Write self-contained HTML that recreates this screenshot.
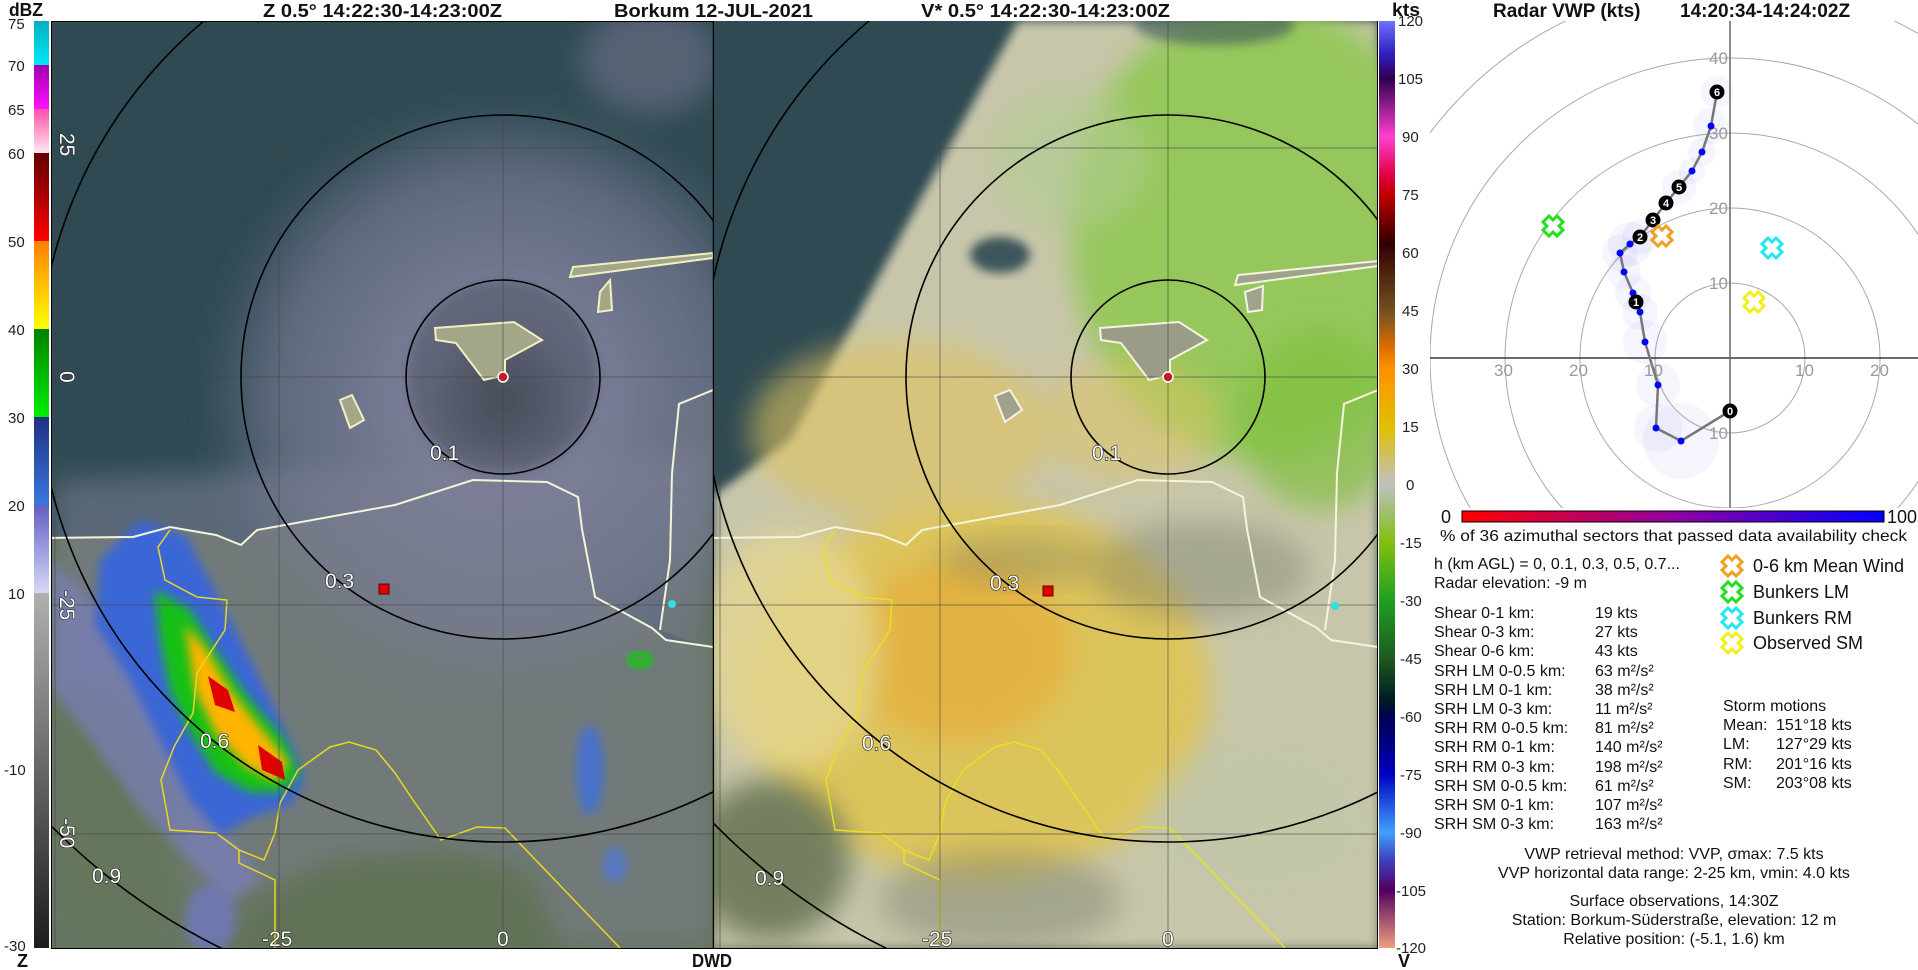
<!DOCTYPE html>
<html><head><meta charset="utf-8"><style>
html,body{margin:0;padding:0;background:#fff;width:1918px;height:970px;overflow:hidden}
svg{display:block}
.t{font-family:"Liberation Sans Narrow","Liberation Sans",sans-serif;font-weight:bold;font-size:18px;fill:#111}
.cb{font-family:"Liberation Sans",sans-serif;font-size:15px;fill:#222}
.pl{font-family:"Liberation Sans",sans-serif;font-size:21px;fill:#fff;stroke:#222;stroke-width:1.2px;paint-order:stroke}
.v{font-family:"Liberation Sans",sans-serif;font-size:16px;fill:#111}
.g{font-family:"Liberation Sans",sans-serif;font-size:17px;fill:#999}
.lg{font-family:"Liberation Sans",sans-serif;font-size:18px;fill:#111}
.vt{font-family:"Liberation Sans",sans-serif;font-weight:bold;font-size:19px;fill:#111}
.n{font-family:"Liberation Sans",sans-serif;font-weight:bold;font-size:11px;fill:#fff}
</style></head><body>
<svg width="1918" height="970" viewBox="0 0 1918 970" xmlns="http://www.w3.org/2000/svg">
<defs>
<filter id="b" x="-20%" y="-20%" width="140%" height="140%"><feGaussianBlur stdDeviation="14"/></filter>
<filter id="b2" x="-20%" y="-20%" width="140%" height="140%"><feGaussianBlur stdDeviation="5"/></filter>
<clipPath id="cl"><rect x="52" y="21" width="661" height="927"/></clipPath>
<clipPath id="cr"><rect x="714" y="21" width="663" height="927"/></clipPath>
<clipPath id="cv"><rect x="1430" y="21" width="488" height="487"/></clipPath>
<linearGradient id="kts" x1="0" y1="21" x2="0" y2="948" gradientUnits="userSpaceOnUse">
<stop offset="0" stop-color="#7070ff"/><stop offset="0.035" stop-color="#3020c0"/><stop offset="0.0625" stop-color="#300050"/>
<stop offset="0.125" stop-color="#ff40d0"/><stop offset="0.167" stop-color="#e00040"/><stop offset="0.1875" stop-color="#c00000"/>
<stop offset="0.24" stop-color="#300000"/><stop offset="0.3125" stop-color="#705020"/><stop offset="0.354" stop-color="#e07000"/>
<stop offset="0.375" stop-color="#ff9000"/><stop offset="0.4375" stop-color="#e0c000"/><stop offset="0.5" stop-color="#c0c0c0"/>
<stop offset="0.5625" stop-color="#80c010"/><stop offset="0.625" stop-color="#20a020"/><stop offset="0.6875" stop-color="#1e5a20"/>
<stop offset="0.73" stop-color="#002020"/><stop offset="0.75" stop-color="#000050"/><stop offset="0.8125" stop-color="#0000c0"/>
<stop offset="0.875" stop-color="#40a0ff"/><stop offset="0.905" stop-color="#4040c0"/><stop offset="0.9375" stop-color="#500060"/>
<stop offset="1" stop-color="#f0a080"/></linearGradient>
<linearGradient id="pct" x1="0" y1="0" x2="1" y2="0"><stop offset="0" stop-color="#ff0000"/><stop offset="0.5" stop-color="#9000a0"/><stop offset="1" stop-color="#0000ff"/></linearGradient>
<linearGradient id="g1" x1="0" y1="0" x2="0" y2="1"><stop offset="0" stop-color="#00b0c0"/><stop offset="1" stop-color="#00e8f8"/></linearGradient>
<linearGradient id="g2" x1="0" y1="0" x2="0" y2="1"><stop offset="0" stop-color="#a000b0"/><stop offset="1" stop-color="#ff10ff"/></linearGradient>
<linearGradient id="g3" x1="0" y1="0" x2="0" y2="1"><stop offset="0" stop-color="#ff50a8"/><stop offset="1" stop-color="#ffe8f0"/></linearGradient>
<linearGradient id="g4" x1="0" y1="0" x2="0" y2="1"><stop offset="0" stop-color="#600000"/><stop offset="1" stop-color="#ff0000"/></linearGradient>
<linearGradient id="g5" x1="0" y1="0" x2="0" y2="1"><stop offset="0" stop-color="#ff8000"/><stop offset="1" stop-color="#ffff00"/></linearGradient>
<linearGradient id="g6" x1="0" y1="0" x2="0" y2="1"><stop offset="0" stop-color="#008000"/><stop offset="1" stop-color="#00f000"/></linearGradient>
<linearGradient id="g7" x1="0" y1="0" x2="0" y2="1"><stop offset="0" stop-color="#203080"/><stop offset="1" stop-color="#3878e0"/></linearGradient>
<linearGradient id="g8" x1="0" y1="0" x2="0" y2="1"><stop offset="0" stop-color="#6060c0"/><stop offset="1" stop-color="#d8d8fa"/></linearGradient>
<linearGradient id="g9" x1="0" y1="0" x2="0" y2="1"><stop offset="0" stop-color="#b0b0b0"/><stop offset="1" stop-color="#1c1c1c"/></linearGradient>
<radialGradient id="disc" cx="503" cy="400" r="300" gradientUnits="userSpaceOnUse"><stop offset="0" stop-color="#4a505e"/><stop offset="0.3" stop-color="#7a7e98"/><stop offset="0.75" stop-color="#6c7288" stop-opacity="0.8"/><stop offset="1" stop-color="#6c7288" stop-opacity="0"/></radialGradient>
</defs>

<text class="t" x="9" y="16" textLength="34" lengthAdjust="spacingAndGlyphs">dBZ</text>
<text class="t" x="263" y="17" textLength="239" lengthAdjust="spacingAndGlyphs">Z 0.5°  14:22:30-14:23:00Z</text>
<text class="t" x="614" y="17" textLength="199" lengthAdjust="spacingAndGlyphs">Borkum  12-JUL-2021</text>
<text class="t" x="921" y="17" textLength="249" lengthAdjust="spacingAndGlyphs">V* 0.5°  14:22:30-14:23:00Z</text>
<text class="t" x="1392" y="16" textLength="28" lengthAdjust="spacingAndGlyphs">kts</text>
<text class="t" x="17" y="967">Z</text>
<text class="t" x="692" y="967" textLength="40" lengthAdjust="spacingAndGlyphs">DWD</text>
<text class="t" x="1398" y="967">V</text>

<rect x="34" y="21" width="15" height="44" fill="url(#g1)"/>
<rect x="34" y="65" width="15" height="44" fill="url(#g2)"/>
<rect x="34" y="109" width="15" height="44" fill="url(#g3)"/>
<rect x="34" y="153" width="15" height="88" fill="url(#g4)"/>
<rect x="34" y="241" width="15" height="88" fill="url(#g5)"/>
<rect x="34" y="329" width="15" height="88" fill="url(#g6)"/>
<rect x="34" y="417" width="15" height="88" fill="url(#g7)"/>
<rect x="34" y="505" width="15" height="88" fill="url(#g8)"/>
<rect x="34" y="593" width="15" height="355" fill="url(#g9)"/>
<g class="cb">
<text x="8" y="29">75</text><text x="8" y="71">70</text><text x="8" y="115">65</text><text x="8" y="159">60</text>
<text x="8" y="247">50</text><text x="8" y="335">40</text><text x="8" y="423">30</text><text x="8" y="511">20</text>
<text x="8" y="599">10</text><text x="4" y="775">-10</text><text x="4" y="951">-30</text>
</g>

<!-- LEFT PANEL -->
<g clip-path="url(#cl)">
<rect x="52" y="21" width="661" height="927" fill="#2f4a53"/>
<path d="M40 538 L133 537 L170 527 L216 535 L241 545 L257 530 L395 505 L473 480 L547 482 L578 497 L582 529 L595 597 L652 628 L666 640 L713 647 L713 948 L40 948 Z" fill="#627256"/>
<path d="M679 404 L713 390 L713 650 L660 630 L670 560 L672 473 Z" fill="#55684c"/>
<circle cx="503" cy="400" r="300" fill="url(#disc)" filter="url(#b)"/>
<path d="M52 480 L713 450 L713 948 L560 948 L530 870 L450 850 L330 860 L250 900 L220 948 L52 948 Z" fill="#7e8196" opacity="0.55" filter="url(#b)"/>
<path d="M52 680 L120 700 L170 800 L200 948 L52 948 Z" fill="#647656" opacity="0.8" filter="url(#b)"/>
<ellipse cx="650" cy="60" rx="70" ry="55" fill="#6e7288" opacity="0.6" filter="url(#b)"/>
<circle cx="503" cy="377" r="95" fill="#3a404a" opacity="0.35" filter="url(#b2)"/>
<path d="M52 560 L90 600 L130 660 L165 730 L200 800 L240 850 L260 880 L230 900 L190 860 L140 810 L90 740 L52 690 Z" fill="#7c80c8" opacity="0.6" filter="url(#b2)"/>
<path d="M140 520 L185 535 L215 590 L250 660 L285 730 L305 780 L290 805 L250 818 L220 835 L190 800 L160 740 L130 680 L95 625 L100 560 Z" fill="#3a66d6" filter="url(#b2)"/>
<path d="M155 590 L190 610 L215 650 L250 700 L285 740 L300 775 L280 792 L250 792 L215 772 L190 732 L170 690 L160 640 Z" fill="#14c014" filter="url(#b2)"/>
<path d="M185 625 L205 648 L230 690 L262 730 L288 762 L276 782 L245 766 L215 732 L195 690 Z" fill="#ffb400" filter="url(#b2)"/>
<path d="M208 676 L228 690 L235 712 L215 705 Z M258 745 L282 762 L285 780 L262 770 Z" fill="#e00000"/>
<ellipse cx="590" cy="770" rx="14" ry="45" fill="#4070e0" opacity="0.8" filter="url(#b2)"/>
<ellipse cx="615" cy="865" rx="12" ry="18" fill="#4a78e0" opacity="0.7" filter="url(#b2)"/>
<ellipse cx="210" cy="920" rx="25" ry="35" fill="#7078c8" opacity="0.7" filter="url(#b2)"/>
<ellipse cx="640" cy="660" rx="14" ry="10" fill="#20c020" opacity="0.7"/>
<path d="M435 328 L514 322 L542 340 L505 360 L505 375 L484 380 L456 343 L436 340 Z" fill="#a4a68a" stroke="#f0f0c0" stroke-width="2"/>
<path d="M573 267 L713 253 L713 258 L570 277 Z" fill="#a4a68a" stroke="#f0f0c0" stroke-width="2"/>
<path d="M600 292 L610 280 L612 310 L598 312 Z M340 400 L352 395 L364 420 L350 428 Z" fill="#a4a68a" stroke="#f0f0c0" stroke-width="2"/>
<polyline points="40,538 133,537 170,527 216,535 241,545 257,530 395,505 473,480 547,482 578,497 582,529 595,597 652,628 666,640 713,647" fill="none" stroke="#f4f4d8" stroke-width="2"/>
<polyline points="713,390 679,404 672,473 670,560 660,630" fill="none" stroke="#f4f4d8" stroke-width="2"/>
<polyline points="170,530 158,547 165,580 197,597 227,600 225,630 197,673 193,713 174,747 161,780 170,830 216,833 239,850 264,860 275,833 280,803 298,770 330,747 349,742 376,750 395,773 413,800 441,840 477,827 505,828 620,948" fill="none" stroke="#e8d820" stroke-width="1.5"/>
<polyline points="239,850 239,863 275,880 275,948" fill="none" stroke="#e8d820" stroke-width="1.5"/>
<g stroke="#444" stroke-opacity="0.6" stroke-width="1"><line x1="55" y1="21" x2="55" y2="948"/><line x1="279" y1="21" x2="279" y2="948"/><line x1="503" y1="21" x2="503" y2="948"/>
<line x1="52" y1="148" x2="713" y2="148"/><line x1="52" y1="377" x2="713" y2="377"/><line x1="52" y1="605" x2="713" y2="605"/><line x1="52" y1="834" x2="713" y2="834"/></g>
<g fill="none" stroke="#000" stroke-width="1.6"><circle cx="503" cy="377" r="97"/><circle cx="503" cy="377" r="262"/><circle cx="503" cy="377" r="465"/><circle cx="503" cy="377" r="637"/></g>
<rect x="379" y="584" width="10" height="10" fill="#e00000" stroke="#600" stroke-width="1"/>
<circle cx="672" cy="604" r="4" fill="#30e0e0"/>
<circle cx="503" cy="377" r="5" fill="#c02020" stroke="#fff" stroke-width="1.5"/>
<g class="pl"><text x="430" y="460">0.1</text><text x="325" y="588">0.3</text><text x="200" y="748">0.6</text><text x="92" y="883">0.9</text>
<text x="262" y="946">-25</text><text x="497" y="946">0</text>
<text transform="translate(60,133) rotate(90)">25</text><text transform="translate(60,371) rotate(90)">0</text>
<text transform="translate(60,590) rotate(90)">-25</text><text transform="translate(60,818) rotate(90)">-50</text></g>
</g>
<line x1="713.5" y1="21" x2="713.5" y2="948" stroke="#000" stroke-width="1.5"/>
<rect x="51.5" y="21.5" width="1326" height="927" fill="none" stroke="#000" stroke-width="1"/>

<!-- RIGHT PANEL -->
<g clip-path="url(#cr)">
<rect x="714" y="21" width="663" height="927" fill="#2f4a53"/>
<path d="M705 538 L798 537 L835 527 L881 535 L906 545 L922 530 L1060 505 L1138 480 L1212 482 L1243 497 L1247 529 L1260 597 L1317 628 L1331 640 L1378 647 L1378 948 L705 948 Z" fill="#667458"/>
<path d="M1018 21 L1378 21 L1378 948 L714 948 L714 495 L790 440 L850 330 L920 200 Z" fill="#c8c6aa" filter="url(#b2)"/>
<ellipse cx="1260" cy="230" rx="190" ry="230" fill="#8ec850" opacity="0.85" filter="url(#b)"/>
<ellipse cx="1320" cy="420" rx="80" ry="90" fill="#80c040" opacity="0.7" filter="url(#b)"/>
<ellipse cx="1070" cy="160" rx="80" ry="70" fill="#b0cc90" opacity="0.6" filter="url(#b)"/>
<ellipse cx="980" cy="690" rx="230" ry="190" fill="#e2c448" opacity="0.8" filter="url(#b)"/>
<ellipse cx="960" cy="650" rx="110" ry="90" fill="#e8a830" opacity="0.6" filter="url(#b)"/>
<ellipse cx="900" cy="430" rx="150" ry="90" fill="#e0c460" opacity="0.6" filter="url(#b)"/>
<ellipse cx="790" cy="650" rx="90" ry="120" fill="#e4d690" opacity="0.8" filter="url(#b)"/>
<ellipse cx="1130" cy="420" rx="90" ry="60" fill="#e0c460" opacity="0.5" filter="url(#b)"/>
<ellipse cx="1200" cy="570" rx="110" ry="50" fill="#6a7064" opacity="0.35" filter="url(#b)"/>
<ellipse cx="1020" cy="560" rx="80" ry="25" fill="#6a7064" opacity="0.3" filter="url(#b)"/>
<ellipse cx="770" cy="860" rx="80" ry="80" fill="#5e6e4e" opacity="0.8" filter="url(#b)"/>
<ellipse cx="1000" cy="900" rx="120" ry="50" fill="#7a806a" opacity="0.45" filter="url(#b)"/>
<ellipse cx="1260" cy="820" rx="110" ry="80" fill="#c0c8a8" opacity="0.6" filter="url(#b)"/>
<ellipse cx="1000" cy="255" rx="30" ry="18" fill="#2f4a53" opacity="0.9" filter="url(#b2)"/>
<ellipse cx="1215" cy="25" rx="80" ry="20" fill="#3c555a" opacity="0.6" filter="url(#b2)"/>
<path d="M1100 328 L1179 322 L1207 340 L1170 360 L1170 375 L1149 380 L1121 343 L1101 340 Z" fill="#9a9c88" stroke="#f4f4e0" stroke-width="2"/>
<path d="M1238 275 L1378 261 L1378 266 L1235 285 Z" fill="#a0a28c" stroke="#f4f4e0" stroke-width="2"/>
<path d="M995 396 L1010 390 L1022 410 L1005 422 Z M1245 292 L1263 286 L1262 310 L1248 312 Z" fill="#a0a28c" stroke="#f4f4e0" stroke-width="2"/>
<polyline points="705,538 798,537 835,527 881,535 906,545 922,530 1060,505 1138,480 1212,482 1243,497 1247,529 1260,597 1317,628 1331,640 1378,647" fill="none" stroke="#f4f4e0" stroke-width="2"/>
<polyline points="1378,390 1344,404 1337,473 1335,560 1325,630" fill="none" stroke="#f4f4e0" stroke-width="2"/>
<polyline points="835,530 823,547 830,580 862,597 892,600 890,630 862,673 858,713 839,747 826,780 835,830 881,833 904,850 929,860 940,833 945,803 963,770 995,747 1014,742 1041,750 1060,773 1078,800 1106,840 1142,827 1170,828 1285,948" fill="none" stroke="#e8e020" stroke-width="1.5"/>
<polyline points="904,850 904,863 940,880 940,948" fill="none" stroke="#e8e020" stroke-width="1.5"/>
<g stroke="#444" stroke-opacity="0.6" stroke-width="1"><line x1="720" y1="21" x2="720" y2="948"/><line x1="940" y1="21" x2="940" y2="948"/><line x1="1168" y1="21" x2="1168" y2="948"/>
<line x1="714" y1="148" x2="1378" y2="148"/><line x1="714" y1="377" x2="1378" y2="377"/><line x1="714" y1="605" x2="1378" y2="605"/><line x1="714" y1="834" x2="1378" y2="834"/></g>
<g fill="none" stroke="#000" stroke-width="1.6"><circle cx="1168" cy="377" r="97"/><circle cx="1168" cy="377" r="262"/><circle cx="1168" cy="377" r="465"/><circle cx="1168" cy="377" r="637"/></g>
<rect x="1043" y="586" width="10" height="10" fill="#e00000" stroke="#600" stroke-width="1"/>
<circle cx="1335" cy="606" r="4" fill="#30e0e0"/>
<circle cx="1168" cy="377" r="5" fill="#c02020" stroke="#fff" stroke-width="1.5"/>
<g class="pl"><text x="1092" y="460">0.1</text><text x="990" y="590">0.3</text><text x="862" y="750">0.6</text><text x="755" y="885">0.9</text>
<text x="922" y="946">-25</text><text x="1162" y="946">0</text></g>
</g>

<rect x="1379" y="21" width="16" height="927" fill="url(#kts)"/>
<g class="cb">
<text x="1398" y="26">120</text><text x="1398" y="84">105</text><text x="1402" y="142">90</text><text x="1402" y="200">75</text>
<text x="1402" y="258">60</text><text x="1402" y="316">45</text><text x="1402" y="374">30</text><text x="1402" y="432">15</text>
<text x="1406" y="490">0</text><text x="1400" y="548">-15</text><text x="1400" y="606">-30</text><text x="1400" y="664">-45</text>
<text x="1400" y="722">-60</text><text x="1400" y="780">-75</text><text x="1400" y="838">-90</text><text x="1396" y="896">-105</text><text x="1396" y="953">-120</text>
</g>

<!-- VWP -->
<text class="vt" x="1493" y="17">Radar VWP (kts)</text>
<text class="vt" x="1680" y="17">14:20:34-14:24:02Z</text>
<g clip-path="url(#cv)">
<g fill="none" stroke="#aaa" stroke-width="1"><circle cx="1730" cy="358" r="75"/><circle cx="1730" cy="358" r="150"/><circle cx="1730" cy="358" r="225"/><circle cx="1730" cy="358" r="300"/><circle cx="1730" cy="358" r="375"/></g>
<g fill="#7070e0" fill-opacity="0.07">
<circle cx="1681" cy="441" r="38"/><circle cx="1658" cy="428" r="24"/><circle cx="1658" cy="385" r="22"/><circle cx="1645" cy="342" r="22"/>
<circle cx="1640" cy="312" r="18"/><circle cx="1633" cy="293" r="18"/><circle cx="1624" cy="272" r="17"/><circle cx="1620" cy="253" r="18"/>
<circle cx="1630" cy="244" r="22"/><circle cx="1640" cy="237" r="18"/><circle cx="1692" cy="171" r="13"/><circle cx="1702" cy="152" r="14"/>
<circle cx="1711" cy="126" r="18"/><circle cx="1717" cy="92" r="16"/><circle cx="1679" cy="187" r="17"/></g>
</g>
<line x1="1430" y1="358" x2="1918" y2="358" stroke="#111" stroke-width="1.2"/>
<line x1="1730" y1="21" x2="1730" y2="508" stroke="#666" stroke-width="1.5"/>
<g class="g"><text x="1709" y="64">40</text><text x="1709" y="139">30</text><text x="1709" y="214">20</text><text x="1709" y="289">10</text><text x="1709" y="439">10</text>
<text x="1494" y="376">30</text><text x="1569" y="376">20</text><text x="1644" y="376">10</text><text x="1795" y="376">10</text><text x="1870" y="376">20</text></g>
<polyline points="1730,411 1681,441 1656,428 1658,385 1645,342 1640,312 1636,302 1633,293 1624,272 1620,253 1630,244 1640,237 1653,220 1666,203 1679,187 1692,171 1702,152 1711,126 1717,92" fill="none" stroke="#777" stroke-width="2.5"/>
<g fill="#0000ff"><circle cx="1681" cy="441" r="3.5"/><circle cx="1656" cy="428" r="3.5"/><circle cx="1658" cy="385" r="3.5"/><circle cx="1645" cy="342" r="3.5"/><circle cx="1640" cy="312" r="3.5"/><circle cx="1633" cy="293" r="3.5"/><circle cx="1624" cy="272" r="3.5"/><circle cx="1620" cy="253" r="3.5"/><circle cx="1630" cy="244" r="3.5"/><circle cx="1692" cy="171" r="3.5"/><circle cx="1702" cy="152" r="3.5"/><circle cx="1711" cy="126" r="3.5"/></g>
<g fill="#000"><circle cx="1730" cy="411" r="7.5"/><circle cx="1636" cy="302" r="7.5"/><circle cx="1640" cy="237" r="7.5"/><circle cx="1653" cy="220" r="7.5"/><circle cx="1666" cy="203" r="7.5"/><circle cx="1679" cy="187" r="7.5"/><circle cx="1717" cy="92" r="7.5"/></g>
<g class="n" text-anchor="middle"><text x="1730" y="415">0</text><text x="1636" y="306">1</text><text x="1640" y="241">2</text><text x="1653" y="224">3</text><text x="1666" y="207">4</text><text x="1679" y="191">5</text><text x="1717" y="96">6</text></g>
<g fill="#fff" stroke-width="3">
<path transform="translate(1553,226)" stroke="#20e020" d="M-4,-10 L0,-6 L4,-10 L10,-4 L6,0 L10,4 L4,10 L0,6 L-4,10 L-10,4 L-6,0 L-10,-4 Z"/>
<path transform="translate(1662,236)" stroke="#f0a020" d="M-4,-10 L0,-6 L4,-10 L10,-4 L6,0 L10,4 L4,10 L0,6 L-4,10 L-10,4 L-6,0 L-10,-4 Z"/>
<path transform="translate(1772,248)" stroke="#20e8f0" d="M-4,-10 L0,-6 L4,-10 L10,-4 L6,0 L10,4 L4,10 L0,6 L-4,10 L-10,4 L-6,0 L-10,-4 Z"/>
<path transform="translate(1754,302)" stroke="#f0f020" d="M-4,-10 L0,-6 L4,-10 L10,-4 L6,0 L10,4 L4,10 L0,6 L-4,10 L-10,4 L-6,0 L-10,-4 Z"/>
<path transform="translate(1732,566)" stroke="#f0a020" d="M-4,-10 L0,-6 L4,-10 L10,-4 L6,0 L10,4 L4,10 L0,6 L-4,10 L-10,4 L-6,0 L-10,-4 Z"/>
<path transform="translate(1732,592)" stroke="#20e020" d="M-4,-10 L0,-6 L4,-10 L10,-4 L6,0 L10,4 L4,10 L0,6 L-4,10 L-10,4 L-6,0 L-10,-4 Z"/>
<path transform="translate(1732,618)" stroke="#20e8f0" d="M-4,-10 L0,-6 L4,-10 L10,-4 L6,0 L10,4 L4,10 L0,6 L-4,10 L-10,4 L-6,0 L-10,-4 Z"/>
<path transform="translate(1732,643)" stroke="#f0f020" d="M-4,-10 L0,-6 L4,-10 L10,-4 L6,0 L10,4 L4,10 L0,6 L-4,10 L-10,4 L-6,0 L-10,-4 Z"/>
</g>
<rect x="1462" y="511" width="422" height="11" fill="url(#pct)" stroke="#000" stroke-width="1"/>
<text class="lg" x="1441" y="523">0</text><text class="lg" x="1887" y="523">100</text>
<text class="v" x="1440" y="541" textLength="467" lengthAdjust="spacingAndGlyphs">% of 36 azimuthal sectors that passed data availability check</text>
<g class="v">
<text x="1434" y="569">h (km AGL) = 0, 0.1, 0.3, 0.5, 0.7...</text>
<text x="1434" y="588">Radar elevation: -9 m</text>
<text x="1434" y="618">Shear 0-1 km:</text><text x="1595" y="618">19 kts</text>
<text x="1434" y="637">Shear 0-3 km:</text><text x="1595" y="637">27 kts</text>
<text x="1434" y="656">Shear 0-6 km:</text><text x="1595" y="656">43 kts</text>
<text x="1434" y="676">SRH LM 0-0.5 km:</text><text x="1595" y="676">63 m²/s²</text>
<text x="1434" y="695">SRH LM 0-1 km:</text><text x="1595" y="695">38 m²/s²</text>
<text x="1434" y="714">SRH LM 0-3 km:</text><text x="1595" y="714">11 m²/s²</text>
<text x="1434" y="733">SRH RM 0-0.5 km:</text><text x="1595" y="733">81 m²/s²</text>
<text x="1434" y="752">SRH RM 0-1 km:</text><text x="1595" y="752">140 m²/s²</text>
<text x="1434" y="772">SRH RM 0-3 km:</text><text x="1595" y="772">198 m²/s²</text>
<text x="1434" y="791">SRH SM 0-0.5 km:</text><text x="1595" y="791">61 m²/s²</text>
<text x="1434" y="810">SRH SM 0-1 km:</text><text x="1595" y="810">107 m²/s²</text>
<text x="1434" y="829">SRH SM 0-3 km:</text><text x="1595" y="829">163 m²/s²</text>
<text x="1723" y="711">Storm motions</text>
<text x="1723" y="730">Mean:</text><text x="1776" y="730">151°18 kts</text>
<text x="1723" y="749">LM:</text><text x="1776" y="749">127°29 kts</text>
<text x="1723" y="769">RM:</text><text x="1776" y="769">201°16 kts</text>
<text x="1723" y="788">SM:</text><text x="1776" y="788">203°08 kts</text>
</g>
<g class="v" text-anchor="middle">
<text x="1674" y="859">VWP retrieval method: VVP,  σmax: 7.5 kts</text>
<text x="1674" y="878">VVP horizontal data range: 2-25 km,  vmin: 4.0 kts</text>
<text x="1674" y="906">Surface observations, 14:30Z</text>
<text x="1674" y="925">Station: Borkum-Süderstraße,  elevation: 12 m</text>
<text x="1674" y="944">Relative position: (-5.1, 1.6) km</text>
</g>
<g class="lg"><text x="1753" y="572">0-6 km Mean Wind</text><text x="1753" y="598">Bunkers LM</text><text x="1753" y="624">Bunkers RM</text><text x="1753" y="649">Observed SM</text></g>
</svg>
</body></html>
